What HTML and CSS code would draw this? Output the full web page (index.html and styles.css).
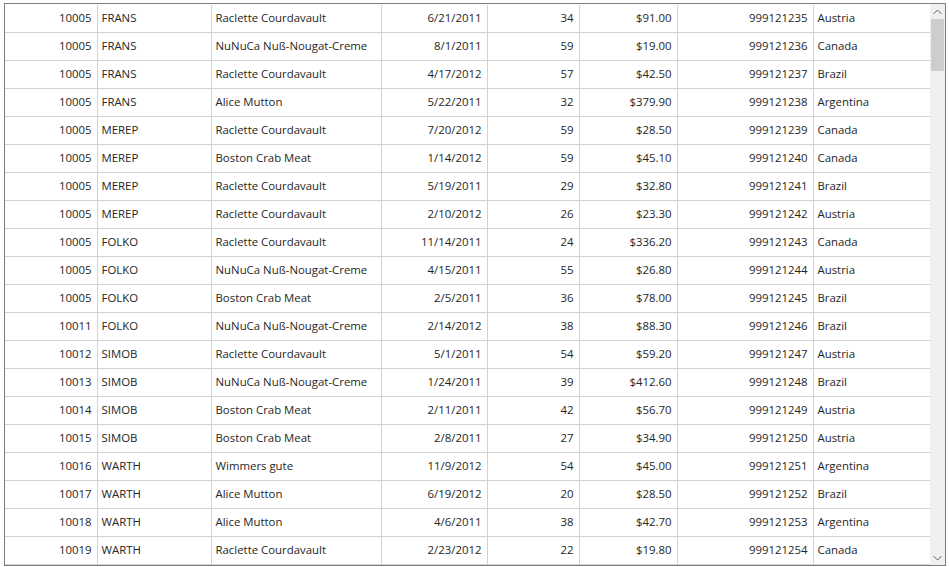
FILE: index.html
```html
<!DOCTYPE html>
<html>
<head>
<meta charset="utf-8">
<link rel="stylesheet" href="styles.css">
</head>
<body>
<div class="grid">
  <div class="viewport">
    <table class="data">
      <colgroup>
        <col class="c-id"><col class="c-cust"><col class="c-prod"><col class="c-date">
        <col class="c-qty"><col class="c-price"><col class="c-num"><col class="c-country">
      </colgroup>
      <tbody>
        <tr><td class="r">10005</td><td>FRANS</td><td>Raclette Courdavault</td><td class="r">6/21/2011</td><td class="r">34</td><td class="r">$91.00</td><td class="r">999121235</td><td>Austria</td></tr>
        <tr><td class="r">10005</td><td>FRANS</td><td>NuNuCa Nuß-Nougat-Creme</td><td class="r">8/1/2011</td><td class="r">59</td><td class="r">$19.00</td><td class="r">999121236</td><td>Canada</td></tr>
        <tr><td class="r">10005</td><td>FRANS</td><td>Raclette Courdavault</td><td class="r">4/17/2012</td><td class="r">57</td><td class="r">$42.50</td><td class="r">999121237</td><td>Brazil</td></tr>
        <tr><td class="r">10005</td><td>FRANS</td><td>Alice Mutton</td><td class="r">5/22/2011</td><td class="r">32</td><td class="r">$379.90</td><td class="r">999121238</td><td>Argentina</td></tr>
        <tr><td class="r">10005</td><td>MEREP</td><td>Raclette Courdavault</td><td class="r">7/20/2012</td><td class="r">59</td><td class="r">$28.50</td><td class="r">999121239</td><td>Canada</td></tr>
        <tr><td class="r">10005</td><td>MEREP</td><td>Boston Crab Meat</td><td class="r">1/14/2012</td><td class="r">59</td><td class="r">$45.10</td><td class="r">999121240</td><td>Canada</td></tr>
        <tr><td class="r">10005</td><td>MEREP</td><td>Raclette Courdavault</td><td class="r">5/19/2011</td><td class="r">29</td><td class="r">$32.80</td><td class="r">999121241</td><td>Brazil</td></tr>
        <tr><td class="r">10005</td><td>MEREP</td><td>Raclette Courdavault</td><td class="r">2/10/2012</td><td class="r">26</td><td class="r">$23.30</td><td class="r">999121242</td><td>Austria</td></tr>
        <tr><td class="r">10005</td><td>FOLKO</td><td>Raclette Courdavault</td><td class="r">11/14/2011</td><td class="r">24</td><td class="r">$336.20</td><td class="r">999121243</td><td>Canada</td></tr>
        <tr><td class="r">10005</td><td>FOLKO</td><td>NuNuCa Nuß-Nougat-Creme</td><td class="r">4/15/2011</td><td class="r">55</td><td class="r">$26.80</td><td class="r">999121244</td><td>Austria</td></tr>
        <tr><td class="r">10005</td><td>FOLKO</td><td>Boston Crab Meat</td><td class="r">2/5/2011</td><td class="r">36</td><td class="r">$78.00</td><td class="r">999121245</td><td>Brazil</td></tr>
        <tr><td class="r">10011</td><td>FOLKO</td><td>NuNuCa Nuß-Nougat-Creme</td><td class="r">2/14/2012</td><td class="r">38</td><td class="r">$88.30</td><td class="r">999121246</td><td>Brazil</td></tr>
        <tr><td class="r">10012</td><td>SIMOB</td><td>Raclette Courdavault</td><td class="r">5/1/2011</td><td class="r">54</td><td class="r">$59.20</td><td class="r">999121247</td><td>Austria</td></tr>
        <tr><td class="r">10013</td><td>SIMOB</td><td>NuNuCa Nuß-Nougat-Creme</td><td class="r">1/24/2011</td><td class="r">39</td><td class="r">$412.60</td><td class="r">999121248</td><td>Brazil</td></tr>
        <tr><td class="r">10014</td><td>SIMOB</td><td>Boston Crab Meat</td><td class="r">2/11/2011</td><td class="r">42</td><td class="r">$56.70</td><td class="r">999121249</td><td>Austria</td></tr>
        <tr><td class="r">10015</td><td>SIMOB</td><td>Boston Crab Meat</td><td class="r">2/8/2011</td><td class="r">27</td><td class="r">$34.90</td><td class="r">999121250</td><td>Austria</td></tr>
        <tr><td class="r">10016</td><td>WARTH</td><td>Wimmers gute</td><td class="r">11/9/2012</td><td class="r">54</td><td class="r">$45.00</td><td class="r">999121251</td><td>Argentina</td></tr>
        <tr><td class="r">10017</td><td>WARTH</td><td>Alice Mutton</td><td class="r">6/19/2012</td><td class="r">20</td><td class="r">$28.50</td><td class="r">999121252</td><td>Brazil</td></tr>
        <tr><td class="r">10018</td><td>WARTH</td><td>Alice Mutton</td><td class="r">4/6/2011</td><td class="r">38</td><td class="r">$42.70</td><td class="r">999121253</td><td>Argentina</td></tr>
        <tr><td class="r">10019</td><td>WARTH</td><td>Raclette Courdavault</td><td class="r">2/23/2012</td><td class="r">22</td><td class="r">$19.80</td><td class="r">999121254</td><td>Canada</td></tr>
      </tbody>
    </table>
  </div>
  <div class="scrollbar">
    <div class="arrow">
      <svg width="9" height="6" viewBox="0 0 9 6"><path d="M0.5 5 L4.5 1 L8.5 5" fill="none" stroke="#606060" stroke-width="1"/></svg>
    </div>
    <div class="track"><div class="thumb"></div></div>
    <div class="arrow">
      <svg width="9" height="6" viewBox="0 0 9 6"><path d="M0.5 1 L4.5 5 L8.5 1" fill="none" stroke="#606060" stroke-width="1"/></svg>
    </div>
  </div>
</div>
</body>
</html>
```
FILE: styles.css
```css
html, body {
  margin: 0;
  padding: 0;
  background: #ffffff;
}
body {
  font-family: "Segoe UI", "Open Sans", "Noto Sans", sans-serif;
  font-size: 11.4px;
  color: #262626;
}
.grid {
  margin: 3px 0 0 4px;
  width: 940px;
  height: 561px;
  border: 1px solid #7d7d7d;
  display: flex;
  background: #ffffff;
}
.viewport {
  width: 925px;
  overflow: hidden;
  padding-top: 1px;
}
.data {
  table-layout: fixed;
  border-collapse: collapse;
  width: 925px;
}
.c-id { width: 92px; }
.c-cust { width: 114px; }
.c-prod { width: 170px; }
.c-date { width: 106px; }
.c-qty { width: 92px; }
.c-price { width: 98px; }
.c-num { width: 136px; }
.c-country { width: 117px; }
.data td {
  height: 26px;
  padding: 0 5px 1px 4px;
  border-right: 1px solid #d2d2d2;
  border-bottom: 1px solid #d2d2d2;
  white-space: nowrap;
  overflow: hidden;
  vertical-align: middle;
  line-height: 16px;
}
.data td.r {
  text-align: right;
  padding-right: 5px;
}
.scrollbar {
  width: 15px;
  background: #f0f0f0;
  display: flex;
  flex-direction: column;
}
.arrow {
  height: 15px;
  display: flex;
  align-items: center;
  justify-content: center;
}
.track {
  flex: 1;
  padding: 0 1px;
}
.thumb {
  height: 52px;
  background: #cdcdcd;
}
```
